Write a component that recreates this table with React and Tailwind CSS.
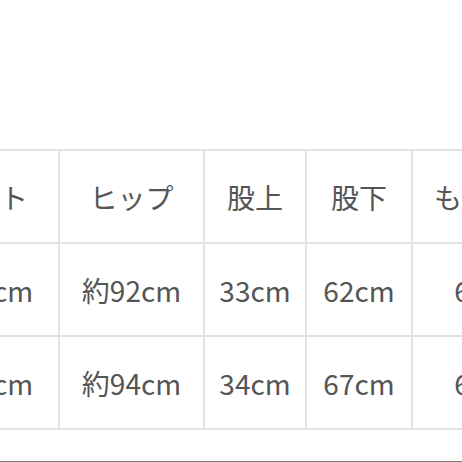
import React from "react";

const cols = ["w-[172px]", "w-[143px]", "w-[100px]", "w-[104px]", "w-[154px]"];

const rows = [
  ["ウエスト", "ヒップ", "股上", "股下", "もも周り"],
  ["約70.5cm", "約92cm", "33cm", "62cm", "60cm"],
  ["約72.5cm", "約94cm", "34cm", "67cm", "62cm"],
];

export default function App() {
  return (
    <div
      className="h-[462px] w-[462px] overflow-hidden bg-white flex flex-col text-[#555]"
      style={{ fontFamily: '"Noto Sans CJK JP", "Noto Sans", sans-serif' }}
    >
      <div className="h-[149px] shrink-0" />
      <div className="ml-[-116px] flex flex-col gap-[2px] p-[2px] bg-[#e3e3e3] w-max">
        {rows.map((row, i) => (
          <div key={i} className="flex gap-[2px]">
            {row.map((cell, j) => (
              <div
                key={j}
                className={`${cols[j]} h-[91px] bg-white flex items-center justify-center text-[28px] whitespace-nowrap`}
              >
                {cell}
              </div>
            ))}
          </div>
        ))}
      </div>
      <div className="flex-1" />
      <div className="h-px bg-[#777]" />
    </div>
  );
}
